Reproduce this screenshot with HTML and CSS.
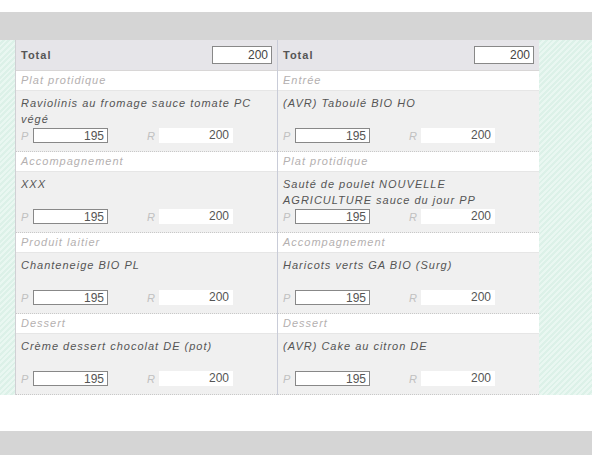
FILE: index.html
```html
<!DOCTYPE html>
<html lang="fr">
<head>
    <meta charset="UTF-8">
    <title>Commande repas</title>
    <link rel="stylesheet" href="styles.css">
</head>
<body>

    <div class="top-bar"></div>

    <div class="content">
        <div class="order-table">

            <!-- colonne 1 -->
            <div class="order-col">
                <div class="total-row">
                    <strong>Total</strong>
                    <input type="text" class="qty-total" value="200">
                </div>

                <div class="cat-row">Plat protidique</div>
                <div class="item-row">
                    <div class="item-name">Raviolinis au fromage sauce tomate PC végé</div>
                    <div class="item-qty">
                        <span class="lbl">P</span><input type="text" class="qty-p" value="195">
                        <span class="lbl lbl-r">R</span><span class="qty-r">200</span>
                    </div>
                </div>

                <div class="cat-row">Accompagnement</div>
                <div class="item-row">
                    <div class="item-name">XXX</div>
                    <div class="item-qty">
                        <span class="lbl">P</span><input type="text" class="qty-p" value="195">
                        <span class="lbl lbl-r">R</span><span class="qty-r">200</span>
                    </div>
                </div>

                <div class="cat-row">Produit laitier</div>
                <div class="item-row">
                    <div class="item-name">Chanteneige BIO PL</div>
                    <div class="item-qty">
                        <span class="lbl">P</span><input type="text" class="qty-p" value="195">
                        <span class="lbl lbl-r">R</span><span class="qty-r">200</span>
                    </div>
                </div>

                <div class="cat-row">Dessert</div>
                <div class="item-row">
                    <div class="item-name">Crème dessert chocolat DE (pot)</div>
                    <div class="item-qty">
                        <span class="lbl">P</span><input type="text" class="qty-p" value="195">
                        <span class="lbl lbl-r">R</span><span class="qty-r">200</span>
                    </div>
                </div>
            </div>

            <!-- colonne 2 -->
            <div class="order-col">
                <div class="total-row">
                    <strong>Total</strong>
                    <input type="text" class="qty-total" value="200">
                </div>

                <div class="cat-row">Entrée</div>
                <div class="item-row">
                    <div class="item-name">(AVR) Taboulé BIO HO</div>
                    <div class="item-qty">
                        <span class="lbl">P</span><input type="text" class="qty-p" value="195">
                        <span class="lbl lbl-r">R</span><span class="qty-r">200</span>
                    </div>
                </div>

                <div class="cat-row">Plat protidique</div>
                <div class="item-row">
                    <div class="item-name">Sauté de poulet NOUVELLE AGRICULTURE sauce du jour PP</div>
                    <div class="item-qty">
                        <span class="lbl">P</span><input type="text" class="qty-p" value="195">
                        <span class="lbl lbl-r">R</span><span class="qty-r">200</span>
                    </div>
                </div>

                <div class="cat-row">Accompagnement</div>
                <div class="item-row">
                    <div class="item-name">Haricots verts GA BIO (Surg)</div>
                    <div class="item-qty">
                        <span class="lbl">P</span><input type="text" class="qty-p" value="195">
                        <span class="lbl lbl-r">R</span><span class="qty-r">200</span>
                    </div>
                </div>

                <div class="cat-row">Dessert</div>
                <div class="item-row">
                    <div class="item-name">(AVR) Cake au citron DE</div>
                    <div class="item-qty">
                        <span class="lbl">P</span><input type="text" class="qty-p" value="195">
                        <span class="lbl lbl-r">R</span><span class="qty-r">200</span>
                    </div>
                </div>
            </div>

        </div>
    </div>

    <div class="bottom-bar"></div>

</body>
</html>
```

FILE: styles.css
```css
body {
    margin: 0;
    padding-top: 12px;
    font-family: "Liberation Sans", Arial, sans-serif;
    font-size: 11px;
    color: #555;
    background-color: white;
}
.top-bar {
    height: 28px;
    background-color: #d5d5d5;
}
.bottom-bar {
    height: 25px;
    margin-top: 36px;
    background-color: #d5d5d5;
}
.content {
    background-color: #e2f4ec;
    background-image: repeating-linear-gradient(-45deg, #e9f7f1 0, #e9f7f1 2px, #dcf1e8 2px, #dcf1e8 4px);
}
.order-table {
    display: flex;
    margin-left: 15px;
    width: 524px;
    border-left: 1px solid #d0d0d4;
}
.order-col {
    width: 261px;
    display: flex;
    flex-direction: column;
}
.order-col + .order-col {
    border-left: 1px solid #c9ccd8;
}
.total-row {
    height: 30px;
    display: flex;
    align-items: center;
    justify-content: space-between;
    padding: 0 5px;
    background-color: #e6e5e9;
    border-bottom: 1px solid #d8d6d6;
}
.total-row strong {
    letter-spacing: 1px;
    color: #555;
}
.qty-total {
    width: 60px;
    height: 18px;
    box-sizing: border-box;
    margin: 0;
    border: 1px solid #888;
    padding: 0 3px;
    font: 12px "Liberation Sans", Arial, sans-serif;
    text-align: right;
    color: #444;
    background-color: white;
}
.cat-row {
    height: 19px;
    line-height: 19px;
    padding: 0 5px;
    background-color: white;
    border-bottom: 1px solid #e6e6e6;
    font-style: italic;
    letter-spacing: 1px;
    color: #b4b0b0;
}
.item-row {
    height: 61px;
    box-sizing: border-box;
    padding: 4px 5px 0;
    background-color: #f0f0f0;
    border-bottom: 1px dotted #c8c8c8;
}
.item-name {
    height: 32px;
    line-height: 16px;
    font-style: italic;
    letter-spacing: 1px;
    color: #555;
}
.item-qty {
    display: flex;
    align-items: center;
    margin-top: 1px;
    height: 15px;
}
.lbl {
    width: 12px;
    color: #c0c0c0;
    font-style: italic;
}
.lbl-r {
    margin-left: 39px;
}
.qty-p {
    width: 75px;
    height: 15px;
    box-sizing: border-box;
    margin: 0;
    border: 1px solid #888;
    padding: 0 3px;
    font: 12px "Liberation Sans", Arial, sans-serif;
    text-align: right;
    color: #555;
    background-color: white;
}
.qty-r {
    width: 74px;
    height: 15px;
    line-height: 15px;
    box-sizing: border-box;
    padding-right: 4px;
    font-size: 12px;
    text-align: right;
    color: #555;
    background-color: white;
}
```
